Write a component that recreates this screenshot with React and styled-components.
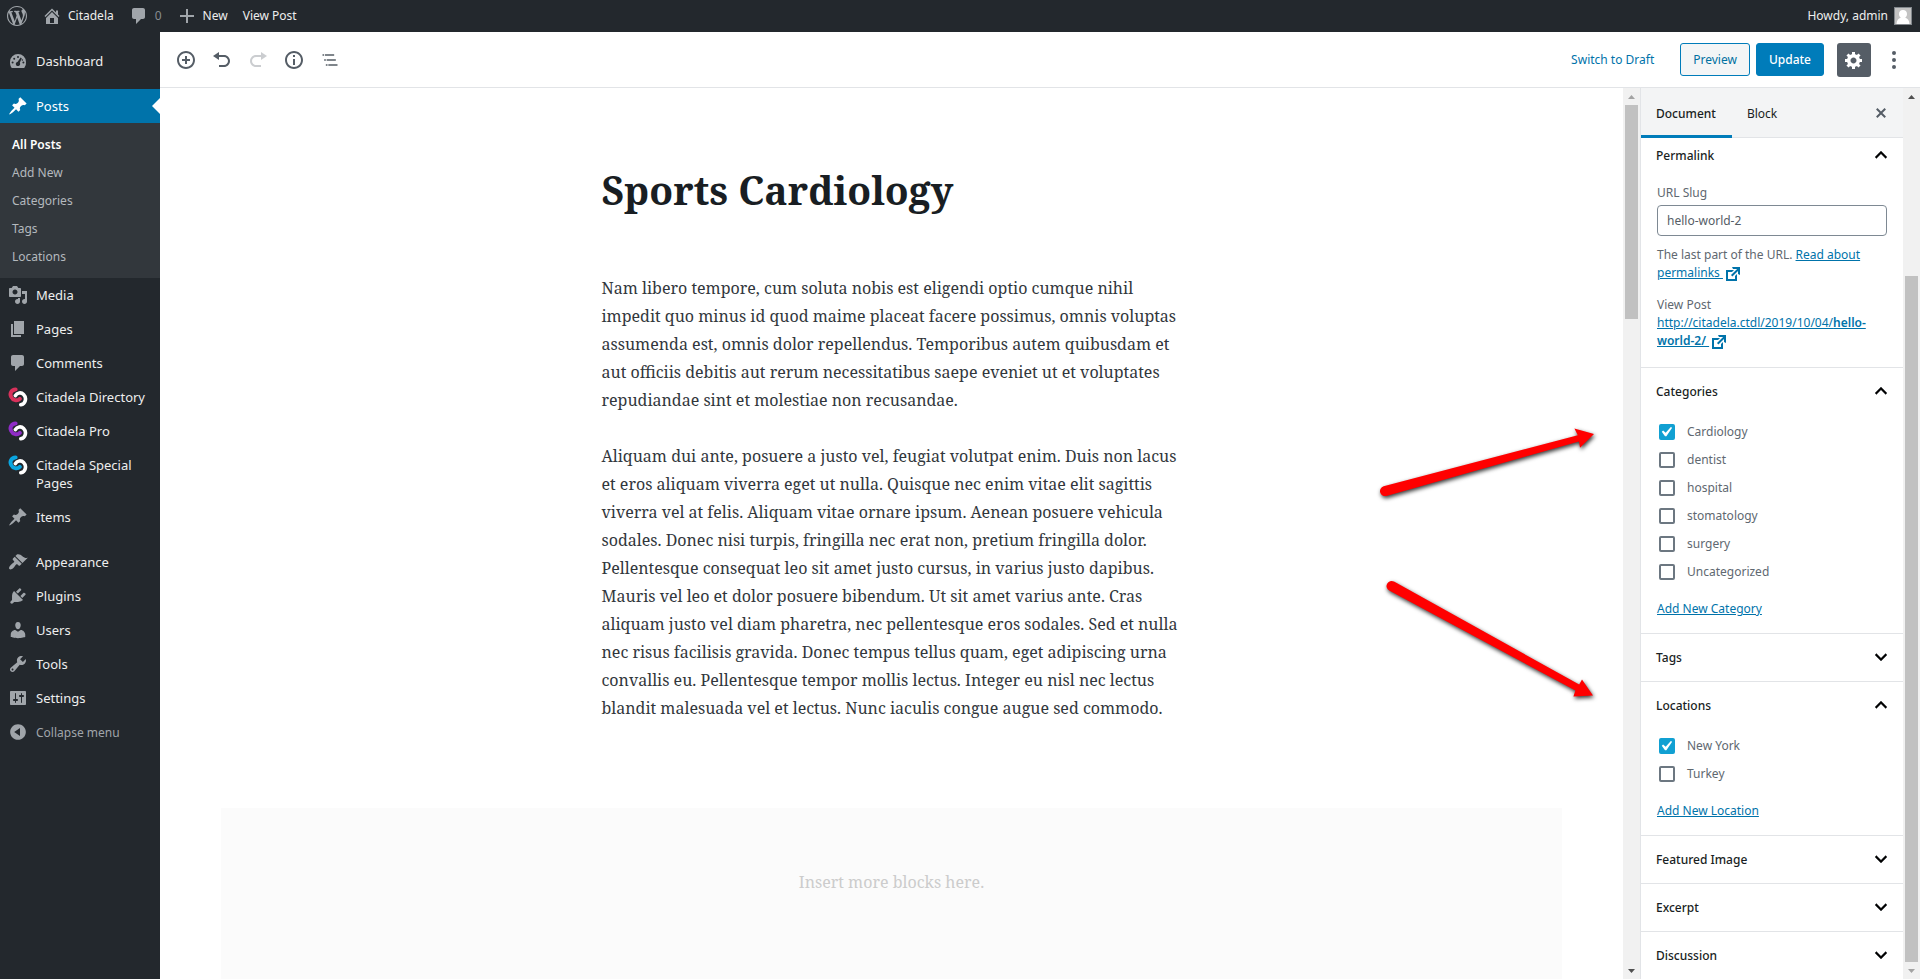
import { useState } from "react";
import styled, { createGlobalStyle, css } from "styled-components";

const GlobalStyle = createGlobalStyle`
*{
    box-sizing:border-box;
}
body{
    margin:0;
    background-color:#fff;
    color:#191e23;
    font-family:"Noto Sans", "Open Sans", sans-serif;
    font-size:12px;
    line-height:18px;
}
button, input{
    font-family:inherit;
    font-size:inherit;
    line-height:inherit;
    margin:0;
}
`

//dashicons, all drawn on a 20x20 grid
const icons = {
    wordpress: "M20 10c0-5.51-4.49-10-10-10C4.48 0 0 4.49 0 10c0 5.52 4.48 10 10 10 5.51 0 10-4.48 10-10zM7.78 15.37L4.37 6.22c.55-.02 1.17-.08 1.17-.08.5-.06.44-1.13-.06-1.11 0 0-1.45.11-2.37.11-.18 0-.37 0-.58-.01C4.12 2.69 6.87 1.11 10 1.11c2.33 0 4.45.87 6.05 2.34-.68-.11-1.65.39-1.65 1.58 0 .74.45 1.36.9 2.1.35.61.55 1.36.55 2.46 0 1.49-1.4 5-1.4 5l-3.03-8.37c.54-.02.82-.17.82-.17.5-.05.44-1.25-.06-1.22 0 0-1.44.12-2.38.12-.87 0-2.33-.12-2.33-.12-.5-.03-.56 1.2-.06 1.22l.92.08 1.26 3.41zM17.41 10c.24-.64.74-1.87.43-4.25.7 1.29 1.05 2.71 1.05 4.25 0 3.29-1.73 6.24-4.4 7.78.97-2.59 1.94-5.2 2.92-7.78zM6.1 18.09C3.12 16.65 1.11 13.53 1.11 10c0-1.3.23-2.48.72-3.59C3.25 10.3 4.67 14.2 6.1 18.09zm4.03-6.63l2.58 6.98c-.86.29-1.76.45-2.71.45-.79 0-1.57-.11-2.29-.33.81-2.38 1.62-4.74 2.42-7.1z",
    home: "M16 8.5l1.53 1.53-1.06 1.06L10 4.6l-6.47 6.49-1.06-1.06L10 2.5l4 4v-2h2v4zm-6-2.46l6 5.99V18H4v-5.97zM12 17v-5H8v5h4z",
    comments: "M5 2h9c1.1 0 2 .9 2 2v7c0 1.1-.9 2-2 2h-2l-5 5v-5H5c-1.1 0-2-.9-2-2V4c0-1.1.9-2 2-2z",
    plus: "M17 9v2h-6v6H9v-6H3V9h6V3h2v6h6z",
    dashboard: "M3.76 17h12.48A7.9 7.9 0 0 0 18 11a8 8 0 1 0-16 0c0 2.25.42 4.37 1.76 6zM9 6a1 1 0 1 1 2 0 1 1 0 0 1-2 0zM5.2 7.8a1 1 0 1 1 2 0 1 1 0 0 1-2 0zM3.6 11.6a1 1 0 1 1 2 0 1 1 0 0 1-2 0zM14.4 11.6a1 1 0 1 1 2 0 1 1 0 0 1-2 0zM12.6 6.6l1.2.7-2 4.4c.4.6.5 1.4.2 2.1-.5 1.1-1.8 1.6-2.9 1.1s-1.6-1.8-1.1-2.9c.3-.7 1-1.2 1.7-1.3zM13.6 9a.8.8 0 1 1 1.6 0 .8.8 0 0 1-1.6 0z",
    pin: "M10.44 3.02l1.82-1.82 6.36 6.35-1.83 1.82c-1.05-.68-2.48-.57-3.41.36l-.75.75c-.92.93-1.04 2.35-.35 3.41l-1.83 1.82-2.41-2.41-2.8 2.79c-.42.42-3.38 2.71-3.8 2.29s1.86-3.39 2.28-3.81l2.79-2.79L4.1 9.36l1.83-1.82c1.05.69 2.48.57 3.4-.36l.75-.75c.93-.92 1.05-2.35.36-3.41z",
    media: "M13 11V4c0-.55-.45-1-1-1h-1.67L9 1H5L3.67 3H2c-.55 0-1 .45-1 1v7c0 .55.45 1 1 1h10c.55 0 1-.45 1-1zM7 4.5c1.38 0 2.5 1.12 2.5 2.5S8.38 9.5 7 9.5 4.5 8.38 4.5 7 5.62 4.5 7 4.5zM14 6h5v10.5c0 1.38-1.12 2.5-2.5 2.5S14 17.88 14 16.5s1.12-2.5 2.5-2.5c.17 0 .34.02.5.05V9h-3V6zm-4 8.05V13h2v3.5c0 1.38-1.12 2.5-2.5 2.5S7 17.88 7 16.5 8.12 14 9.5 14c.17 0 .34.02.5.05z",
    pages: "M6 15V2h10v13H6zm-1 1h8v2H3V5h2v11z",
    appearance: "M14.48 11.06L7.41 3.99l1.5-1.5c.5-.56 2.3-.47 3.51.32 1.21.8 1.43 1.28 2.91 2.1 1.18.64 2.45 1.26 4.45.85zm-.71.71L6.7 4.7 4.93 6.47c-.39.39-.39 1.02 0 1.41l1.06 1.06c.39.39.39 1.03 0 1.42-.6.6-1.43 1.11-2.21 1.69-.35.26-.7.53-1.01.84C1.43 14.23.4 16.08 1.4 17.07c.99 1 2.84-.03 4.18-1.36.31-.31.58-.66.85-1.02.57-.78 1.08-1.61 1.69-2.21.39-.39 1.02-.39 1.41 0l1.06 1.06c.39.39 1.02.39 1.41 0z",
    plugins: "M13.11 4.36L9.87 7.6 8 5.73l3.24-3.24c.35-.34 1.05-.2 1.56.32.52.51.66 1.21.31 1.55zm-8 1.77l.91-1.12 9.01 9.01-1.19.84c-.71.71-2.63 1.16-3.82 1.16H6.14L4.9 17.26c-.59.59-1.54.59-2.12 0-.59-.58-.59-1.53 0-2.12l1.24-1.24v-3.88c0-1.13.4-3.19 1.09-3.89zm7.26 3.97l3.24-3.24c.34-.35 1.04-.21 1.55.31.52.51.66 1.21.31 1.55l-3.24 3.25z",
    users: "M10 9.25c-2.27 0-2.73-3.44-2.73-3.44C7 4.02 7.82 2 9.97 2c2.16 0 2.98 2.02 2.71 3.81 0 0-.41 3.44-2.68 3.44zm0 2.57L12.72 10c2.39 0 4.52 2.33 4.52 4.53v2.49s-3.65 1.13-7.24 1.13c-3.65 0-7.24-1.13-7.24-1.13v-2.49c0-2.25 1.94-4.48 4.47-4.48z",
    tools: "M16.68 9.77c-1.34 1.34-3.3 1.67-4.95.99l-5.41 6.52c-.99.99-2.59.99-3.58 0s-.99-2.59 0-3.57l6.52-5.42c-.68-1.65-.35-3.61.99-4.95 1.28-1.28 3.12-1.62 4.72-1.06l-2.89 2.89 2.82 2.82 2.86-2.87c.53 1.58.18 3.39-1.08 4.65zM3.81 16.21c.4.39 1.04.39 1.43 0 .4-.4.4-1.04 0-1.43-.39-.4-1.03-.4-1.43 0-.39.39-.39 1.03 0 1.43z",
    settings: "M18 16V4c0-.55-.45-1-1-1H3c-.55 0-1 .45-1 1v12c0 .55.45 1 1 1h14c.55 0 1-.45 1-1zM8 11h1c.55 0 1 .45 1 1s-.45 1-1 1H8v1.5c0 .28-.22.5-.5.5s-.5-.22-.5-.5V13H6c-.55 0-1-.45-1-1s.45-1 1-1h1V5.5c0-.28.22-.5.5-.5s.5.22.5.5V11zm5-2h-1c-.55 0-1-.45-1-1s.45-1 1-1h1V5.5c0-.28.22-.5.5-.5s.5.22.5.5V7h1c.55 0 1 .45 1 1s-.45 1-1 1h-1v5.5c0 .28-.22.5-.5.5s-.5-.22-.5-.5V9z",
    collapse: "M10 2.16c4.33 0 7.84 3.51 7.84 7.84s-3.51 7.84-7.84 7.84S2.16 14.33 2.16 10 5.71 2.16 10 2.16zm2 11.72V6.12L6.18 9.97z",
    insert: "M10 1c-5 0-9 4-9 9s4 9 9 9 9-4 9-9-4-9-9-9zm0 16c-3.9 0-7-3.1-7-7s3.1-7 7-7 7 3.1 7 7-3.1 7-7 7zm1-11H9v3H6v2h3v3h2v-3h3V9h-3V6z",
    undo: "M12 5H7V2L1 6l6 4V7h5c2.2 0 4 1.8 4 4s-1.8 4-4 4H7v2h5c3.3 0 6-2.7 6-6s-2.7-6-6-6z",
    redo: "M8 5h5V2l6 4-6 4V7H8c-2.2 0-4 1.8-4 4s1.8 4 4 4h5v2H8c-3.3 0-6-2.7-6-6s2.7-6 6-6z",
    info: "M10 1c-5 0-9 4-9 9s4 9 9 9 9-4 9-9-4-9-9-9zm0 16c-3.9 0-7-3.1-7-7s3.1-7 7-7 7 3.1 7 7-3.1 7-7 7zM9 5h2v2H9zM9 9h2v6H9z",
    gear: "M18 12h-2.18c-.17.7-.44 1.35-.81 1.93l1.54 1.54-2.1 2.1-1.54-1.54c-.58.36-1.23.63-1.91.79V19H8v-2.18c-.68-.16-1.33-.43-1.91-.79l-1.54 1.54-2.12-2.12 1.54-1.54c-.36-.58-.63-1.23-.79-1.91H1V9.03h2.17c.16-.7.44-1.35.8-1.94L2.43 5.55l2.1-2.1 1.54 1.54c.58-.37 1.24-.64 1.93-.81V2h3v2.18c.68.16 1.33.43 1.91.79l1.54-1.54 2.12 2.12-1.54 1.54c.36.59.64 1.24.8 1.94H18V12zm-8.5 1.5c1.66 0 3-1.34 3-3s-1.34-3-3-3-3 1.34-3 3 1.34 3 3 3z",
    more: "M8 3a2 2 0 1 1 4 0 2 2 0 0 1-4 0zM8 10a2 2 0 1 1 4 0 2 2 0 0 1-4 0zM8 17a2 2 0 1 1 4 0 2 2 0 0 1-4 0z",
    close: "M14.95 6.46L11.41 10l3.54 3.54-1.41 1.41L10 11.42l-3.53 3.53-1.42-1.42L8.58 10 5.05 6.47l1.42-1.42L10 8.58l3.54-3.53z",
    external: "M9 3h8v8l-2-1V6.92l-5.6 5.59-1.41-1.41L14.08 5H10zm3 12v-3l2-2v7H3V6h8L9 8H5v7h7z",
    check: "M14.83 4.89l1.34.94-5.81 8.38H9.02L5.78 9.67l1.34-1.25 2.57 2.4z",
};

const Dashicon = ({name}) => {
    return(
        <Svg width="20" height="20" viewBox="0 0 20 20" aria-hidden="true">
            <path fillRule="evenodd" d={icons[name]} />
        </Svg>
    )
};

//the two linked hooks of the Citadela plugins, the left one takes the plugin colour
const CitadelaLogo = ({color}) => {
    return(
        <Svg width="20" height="20" viewBox="0 0 20 20" fill="none" strokeLinecap="round" aria-hidden="true">
            <path d="M7.6 2.4C3.4 2.6 1.4 6.4 3.2 9.8c1.8 3.6 6 4.6 8.6 2" stroke={color} strokeWidth="4" />
            <path d="M7.4 8.6C9 5.6 13.2 5 15.6 7.4c3.4 3.4 2 9.6-2.8 10.4" stroke="#23282d" strokeWidth="5" />
            <path d="M7.4 8.6C9 5.6 13.2 5 15.6 7.4c3.4 3.4 2 9.6-2.8 10.4" stroke="#fff" strokeWidth="3.6" />
        </Svg>
    )
};

const submenu = ["All Posts", "Add New", "Categories", "Tags", "Locations"];

const mainMenu = [
    {label: "Media", icon: "media"},
    {label: "Pages", icon: "pages"},
    {label: "Comments", icon: "comments"},
    {label: "Citadela Directory", logo: "#d8315b"},
    {label: "Citadela Pro", logo: "#8f2cc6"},
    {label: "Citadela Special Pages", logo: "#0aa5e0"},
    {label: "Items", icon: "pin"},
];

const siteMenu = [
    {label: "Appearance", icon: "appearance"},
    {label: "Plugins", icon: "plugins"},
    {label: "Users", icon: "users"},
    {label: "Tools", icon: "tools"},
    {label: "Settings", icon: "settings"},
];

const categories = ["Cardiology", "dentist", "hospital", "stomatology", "surgery", "Uncategorized"];
const locations = ["New York", "Turkey"];

const MenuItem = ({label, icon, logo, active}) => {
    return(
        <MenuLink href="#" $active={active}>
            <MenuIcon>{logo ? <CitadelaLogo color={logo} /> : <Dashicon name={icon} />}</MenuIcon>
            <MenuLabel>{label}</MenuLabel>
        </MenuLink>
    )
};

const AdminMenu = () => {
    return(
        <Menu>
            <MenuItem label="Dashboard" icon="dashboard" />
            <Separator />
            <MenuItem label="Posts" icon="pin" active />
            <Submenu>
                {submenu.map((e,i)=> <SubmenuLink href="#" key={e} $current={i === 0}>{e}</SubmenuLink>)}
            </Submenu>
            {mainMenu.map((e)=> <MenuItem key={e.label} {...e} />)}
            <Separator />
            {siteMenu.map((e)=> <MenuItem key={e.label} {...e} />)}
            <CollapseButton type="button">
                <MenuIcon><Dashicon name="collapse" /></MenuIcon>
                Collapse menu
            </CollapseButton>
        </Menu>
    )
};

const Scrollbar = ({before, thumb, after}) => {
    return(
        <Track aria-hidden="true">
            <Arrow $off={before === 0}><svg width="7" height="4"><path d="M0 4L3.5 0 7 4z" /></svg></Arrow>
            <Gap $size={before} />
            <Thumb $size={thumb} />
            <Gap $size={after} />
            <Arrow $off={after === 0}><svg width="7" height="4"><path d="M0 0L3.5 4 7 0z" /></svg></Arrow>
        </Track>
    )
};

const Panel = ({title, open, first, children}) => {
    return(
        <PanelBox $first={first}>
            <PanelToggle type="button" aria-expanded={!!open} $first={first}>
                {title}
                <svg width="24" height="24" viewBox="0 0 24 24" aria-hidden="true">
                    <path d={open ? "M12 7l-6 6 1.41 1.41L12 9.83l4.59 4.58L18 13z" : "M7.41 7.59L12 12.17l4.59-4.58L18 9l-6 6-6-6z"} stroke="#191e23" strokeWidth="0.4" />
                </svg>
            </PanelToggle>
            {open && <PanelBody>{children}</PanelBody>}
        </PanelBox>
    )
};

const Terms = ({terms, initial}) => {
    const [checked, setChecked] = useState([initial]);

    const handleToggle = (term) => {
        setChecked(checked.includes(term) ? checked.filter((e)=> e !== term) : [...checked, term])
    }

    return(
        <TermList>
            {terms.map((e)=> {
                return(
                    <TermLabel key={e}>
                        <CheckWrapper>
                            <Checkbox type="checkbox" checked={checked.includes(e)} onChange={()=> handleToggle(e)} />
                            {checked.includes(e) && <CheckMark><Dashicon name="check" /></CheckMark>}
                        </CheckWrapper>
                        {e}
                    </TermLabel>
                )
            })}
        </TermList>
    )
};

const Arrows = () => {
    return(
        <ArrowLayer width="280" height="320" viewBox="0 0 280 320" aria-hidden="true">
            <path d="M23.6 86.3L217.8 35.2 214.4 28.6 234 34 220 47.8 219 41.4 26.4 95.9A5 5 0 0 1 23.6 86.3z" />
            <path d="M34 181.6L219.2 284.6 222 279.4 233 295.6 213.4 296.4 215.4 290.6 29.2 190.6A5.1 5.1 0 0 1 34 181.6z" />
        </ArrowLayer>
    )
};

const App = () => {
    return(
        <Page>
            <GlobalStyle />
            <AdminBar>
                <BarLink href="#" aria-label="About WordPress"><Dashicon name="wordpress" /></BarLink>
                <BarLink href="#"><Dashicon name="home" /><span>Citadela</span></BarLink>
                <BarLink href="#" $dim><Dashicon name="comments" /><span>0</span></BarLink>
                <BarLink href="#"><Dashicon name="plus" /><span>New</span></BarLink>
                <BarLink href="#"><span>View Post</span></BarLink>
                <Account href="#">
                    Howdy, admin
                    <Avatar>
                        <svg width="16" height="16" viewBox="0 0 16 16" aria-hidden="true">
                            <path fill="#fff" d="M8 2c2.4 0 4 1.6 4 4 0 1.7-.8 3-1.8 3.8 2.6.8 4 2.6 4.3 6.2h-13c.3-3.6 1.700-5.400 4.300-6.200C4.800 9 4 7.700 4 6c0-2.400 1.600-4 4-4z" />
                        </svg>
                    </Avatar>
                </Account>
            </AdminBar>
            <Body>
                <AdminMenu />
                <EditorWrapper>
                    <Toolbar>
                        <ToolButton type="button" aria-label="Add block"><Dashicon name="insert" /></ToolButton>
                        <ToolButton type="button" aria-label="Undo"><Dashicon name="undo" /></ToolButton>
                        <ToolButton type="button" aria-label="Redo" disabled><Dashicon name="redo" /></ToolButton>
                        <ToolButton type="button" aria-label="Content structure"><Dashicon name="info" /></ToolButton>
                        <ToolButton type="button" aria-label="Block navigation">
                            <Svg width="20" height="20" viewBox="0 0 24 24" aria-hidden="true">
                                <path d="M5 5H3v2h2V5zm3 8h11v-2H8v2zm9-8H6v2h11V5zM7 11H5v2h2v-2zm0 8h2v-2H7v2zm3-2v2h11v-2H10z" />
                            </Svg>
                        </ToolButton>
                        <Actions>
                            <DraftButton type="button">Switch to Draft</DraftButton>
                            <ActionButton type="button">Preview</ActionButton>
                            <ActionButton type="button" $primary>Update</ActionButton>
                            <GearButton type="button" aria-label="Settings"><Dashicon name="gear" /></GearButton>
                            <MoreButton type="button" aria-label="More tools"><Dashicon name="more" /></MoreButton>
                        </Actions>
                    </Toolbar>
                    <Workspace>
                        <Canvas>
                            <Content>
                                <Post>
                                    <Title>Sports Cardiology</Title>
                                    <Paragraph>Nam libero tempore, cum soluta nobis est eligendi optio cumque nihil impedit quo minus id quod maime placeat facere possimus, omnis voluptas assumenda est, omnis dolor repellendus. Temporibus autem quibusdam et aut officiis debitis aut rerum necessitatibus saepe eveniet ut et voluptates repudiandae sint et molestiae non recusandae.</Paragraph>
                                    <Paragraph>Aliquam dui ante, posuere a justo vel, feugiat volutpat enim. Duis non lacus et eros aliquam viverra eget ut nulla. Quisque nec enim vitae elit sagittis viverra vel at felis. Aliquam vitae ornare ipsum. Aenean posuere vehicula sodales. Donec nisi turpis, fringilla nec erat non, pretium fringilla dolor. Pellentesque consequat leo sit amet justo cursus, in varius justo dapibus. Mauris vel leo et dolor posuere bibendum. Ut sit amet varius ante. Cras aliquam justo vel diam pharetra, nec pellentesque eros sodales. Sed et nulla nec risus facilisis gravida. Donec tempus tellus quam, eget adipiscing urna convallis eu. Pellentesque tempor mollis lectus. Integer eu nisl nec lectus blandit malesuada vel et lectus. Nunc iaculis congue augue sed commodo.</Paragraph>
                                </Post>
                                <InsertArea>Insert more blocks here.</InsertArea>
                            </Content>
                            <Scrollbar before={0} thumb={214} after={643} />
                            <Arrows />
                        </Canvas>
                        <Sidebar>
                            <Settings>
                                <Tabs>
                                    <Tab type="button" $active>Document</Tab>
                                    <Tab type="button">Block</Tab>
                                    <CloseButton type="button" aria-label="Close settings"><Dashicon name="close" /></CloseButton>
                                </Tabs>
                                <Panel title="Permalink" open first>
                                    <FieldLabel htmlFor="slug">URL Slug</FieldLabel>
                                    <SlugInput id="slug" type="text" defaultValue="hello-world-2" />
                                    <Help>
                                        The last part of the URL. <TextLink href="#">Read about permalinks <ExternalIcon><Dashicon name="external" /></ExternalIcon></TextLink>
                                    </Help>
                                    <div>View Post</div>
                                    <Address>
                                        <TextLink href="#">http://citadela.ctdl/2019/10/04/<b>hello-world-2/</b> <ExternalIcon><Dashicon name="external" /></ExternalIcon></TextLink>
                                    </Address>
                                </Panel>
                                <Panel title="Categories" open>
                                    <Terms terms={categories} initial="Cardiology" />
                                    <AddLink href="#">Add New Category</AddLink>
                                </Panel>
                                <Panel title="Tags" />
                                <Panel title="Locations" open>
                                    <Terms terms={locations} initial="New York" />
                                    <AddLink href="#">Add New Location</AddLink>
                                </Panel>
                                <Panel title="Featured Image" />
                                <Panel title="Excerpt" />
                                <Panel title="Discussion" />
                            </Settings>
                            <Scrollbar before={171} thumb={686} after={0} />
                        </Sidebar>
                    </Workspace>
                </EditorWrapper>
            </Body>
        </Page>
    )
};

const Svg = styled.svg`
display:block;
flex-shrink:0;
fill:${props => props.fill || "currentColor"};
`

const Page = styled.div`
display:flex;
flex-direction:column;
height:100vh;
overflow:hidden;
`

const AdminBar = styled.header`
display:flex;
align-items:center;
gap:15px;
flex-shrink:0;
height:32px;
padding:0 8px 0 7px;
background-color:#23282d;
`

const BarLink = styled.a`
display:flex;
align-items:center;
gap:6px;
color:#a0a5aa;
text-decoration:none;
span{
    color:${props => (props.$dim ? "#888c90" : "#eee")};
}
`

const Account = styled.a`
display:flex;
align-items:center;
gap:6px;
margin-left:auto;
color:#eee;
text-decoration:none;
`

const Avatar = styled.span`
display:block;
width:18px;
height:18px;
border:1px solid #82878c;
background-color:#c3c3c3;
svg{
    display:block;
}
`

const Body = styled.div`
display:flex;
flex:1;
min-height:0;
`

const Menu = styled.nav`
display:flex;
flex-direction:column;
flex-shrink:0;
width:160px;
padding-top:12px;
background-color:#23282d;
font-size:13px;
`

const MenuLink = styled.a`
position:relative;
display:flex;
color:#eee;
text-decoration:none;
background-color:${props => (props.$active ? "#0073aa" : "transparent")};
${props => props.$active && css`
    color:#fff;
    &::after{
        content:"";
        position:absolute;
        right:0;
        top:9px;
        border:8px solid transparent;
        border-left-width:0;
        border-right-color:#fff;
    }
    span{
        color:#fff;
    }
`}
`

const MenuIcon = styled.span`
display:flex;
justify-content:center;
flex-shrink:0;
width:36px;
padding-top:7px;
color:#a0a5aa;
`

const MenuLabel = styled.span`
padding:8px 8px 8px 0;
`

const Separator = styled.div`
height:11px;
`

const Submenu = styled.div`
display:flex;
flex-direction:column;
padding:8px 0 7px;
background-color:#32373c;
font-size:12px;
`

const SubmenuLink = styled.a`
padding:5px 12px;
color:${props => (props.$current ? "#fff" : "#b4b9be")};
font-weight:${props => (props.$current ? 600 : 400)};
text-decoration:none;
`

const CollapseButton = styled.button`
display:flex;
height:34px;
padding:0;
border:0;
background:none;
color:#a0a5aa;
font-size:12px;
line-height:36px;
cursor:pointer;
`

const EditorWrapper = styled.main`
display:flex;
flex-direction:column;
flex:1;
min-width:0;
`

const Toolbar = styled.div`
display:flex;
align-items:center;
flex-shrink:0;
height:56px;
padding:0 8px;
border-bottom:1px solid #e2e4e7;
`

const ToolButton = styled.button`
display:flex;
align-items:center;
justify-content:center;
width:36px;
height:36px;
padding:0;
border:0;
background:none;
color:#555d66;
cursor:pointer;
&:disabled{
    opacity:0.3;
}
`

const Actions = styled.div`
display:flex;
align-items:center;
margin-left:auto;
`

const DraftButton = styled.button`
margin-right:20px;
border:0;
background:none;
color:#0073aa;
cursor:pointer;
`

const ActionButton = styled.button`
height:33px;
margin-right:6px;
padding:0 12px;
border:1px solid #007cba;
border-radius:3px;
background-color:${props => (props.$primary ? "#007cba" : "#f3f5f6")};
color:${props => (props.$primary ? "#fff" : "#0071a1")};
font-weight:${props => (props.$primary ? 500 : 400)};
cursor:pointer;
`

const GearButton = styled(ToolButton)`
width:34px;
height:34px;
margin-left:7px;
border-radius:3px;
background-color:#555d66;
color:#fff;
`

const MoreButton = styled(ToolButton)`
margin-left:5px;
`

const Workspace = styled.div`
display:flex;
flex:1;
min-height:0;
`

const Canvas = styled.section`
position:relative;
display:flex;
flex:1;
min-width:0;
`

const Content = styled.div`
display:flex;
flex-direction:column;
flex:1;
min-width:0;
padding:74px 61px 0;
overflow:hidden;
font-family:"Noto Serif", "DejaVu Serif", serif;
font-size:16px;
line-height:28px;
`

const Post = styled.article`
width:100%;
max-width:580px;
margin:0 auto 86px;
`

const Title = styled.h1`
margin:0 0 57px;
font-size:39px;
line-height:55px;
font-weight:700;
`

const Paragraph = styled.p`
margin:0 0 28px;
color:#32373c;
&:last-child{
    margin-bottom:0;
}
`

const InsertArea = styled.div`
flex:1;
padding-top:60px;
background-color:#fbfbfb;
color:#ccc;
text-align:center;
`

const ArrowLayer = styled.svg`
position:absolute;
top:312px;
right:0;
fill:#f00;
pointer-events:none;
filter:drop-shadow(1px 2px 2px rgba(0,0,0,0.8));
`

const Track = styled.div`
display:flex;
flex-direction:column;
flex-shrink:0;
width:17px;
background-color:#f1f1f1;
`

const Arrow = styled.div`
display:flex;
align-items:center;
justify-content:center;
height:17px;
fill:${props => (props.$off ? "#a3a3a3" : "#505050")};
`

const Gap = styled.div`
flex:${props => props.$size} 1 0;
`

const Thumb = styled.div`
flex:${props => props.$size} 1 0;
margin:0 2px;
background-color:#c1c1c1;
`

const Sidebar = styled.aside`
display:flex;
flex-shrink:0;
width:280px;
border-left:1px solid #e2e4e7;
`

const Settings = styled.div`
flex:1;
min-width:0;
overflow:hidden;
color:#606870;
`

const Tabs = styled.div`
display:flex;
height:50px;
border-bottom:1px solid #e2e4e7;
background-color:#f3f4f5;
`

const Tab = styled.button`
height:50px;
padding:5px 16px 0 15px;
border:0;
border-bottom:3px solid ${props => (props.$active ? "#007cba" : "transparent")};
background:none;
color:#191e23;
font-weight:${props => (props.$active ? 500 : 400)};
cursor:pointer;
`

const CloseButton = styled(ToolButton)`
width:24px;
height:50px;
margin-left:auto;
margin-right:10px;
`

const PanelBox = styled.section`
border-top:${props => (props.$first ? 0 : 1)}px solid #e2e4e7;
`

const PanelToggle = styled.button`
display:flex;
align-items:center;
justify-content:space-between;
width:100%;
height:${props => (props.$first ? 35 : 47)}px;
padding:1px 10px 0 15px;
border:0;
background:none;
color:#191e23;
font-weight:500;
cursor:pointer;
`

const PanelBody = styled.div`
padding:3px 16px 15px;
`

const FieldLabel = styled.label`
display:block;
margin-top:8px;
`

const SlugInput = styled.input`
width:100%;
height:31px;
margin:3px 0 10px;
padding:0 9px;
border:1px solid #7e8993;
border-radius:4px;
background-color:#fff;
color:#555d66;
`

const Help = styled.p`
margin:0 0 14px;
`

const Address = styled.div`
margin-bottom:2px;
b{
    font-weight:600;
}
`

const TextLink = styled.a`
color:#0073aa;
text-decoration:underline;
`

//a 20px icon on an 18px line, the negative margin keeps the line from growing
const ExternalIcon = styled.span`
display:inline-block;
margin:-2px 0;
vertical-align:middle;
`

const TermList = styled.div`
display:flex;
flex-direction:column;
`

const TermLabel = styled.label`
display:flex;
align-items:center;
gap:12px;
height:28px;
padding-left:2px;
`

const CheckWrapper = styled.span`
position:relative;
width:16px;
height:16px;
`

const Checkbox = styled.input`
appearance:none;
display:block;
width:16px;
height:16px;
border:2px solid #6c7781;
border-radius:2px;
&:checked{
    border-color:#11a0d2;
    background-color:#11a0d2;
}
`

const CheckMark = styled.span`
position:absolute;
top:-2px;
left:-3px;
color:#fff;
pointer-events:none;
`

const AddLink = styled(TextLink)`
display:inline-block;
margin-top:14px;
`

export default App;
